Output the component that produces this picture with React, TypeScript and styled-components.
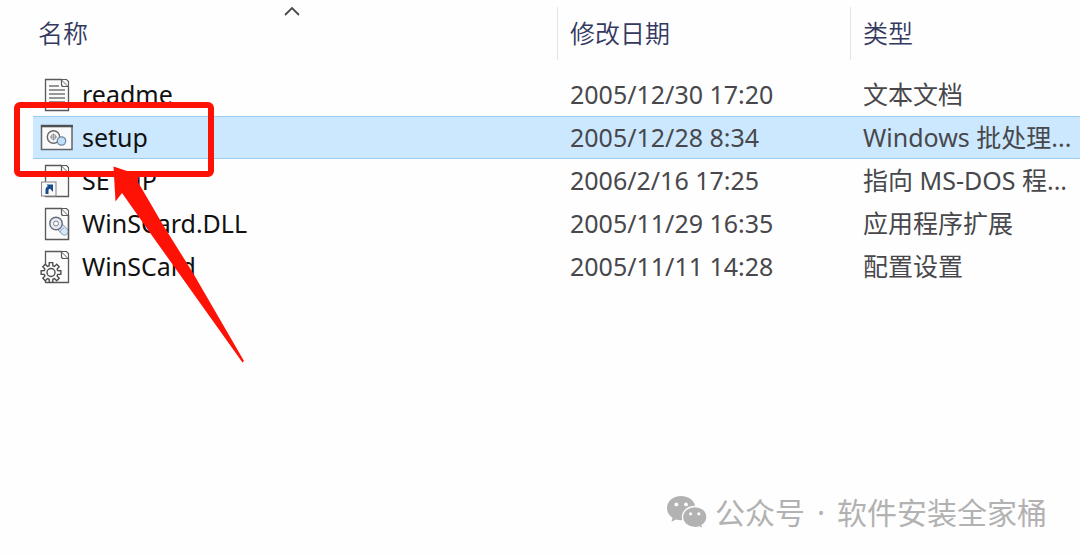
import React from "react";
import styled, { createGlobalStyle } from "styled-components";

const GlobalStyle = createGlobalStyle`
  * { box-sizing: border-box; }
  body {
    margin: 0;
    background: #fefefe;
    font-family: "Noto Sans", "Noto Sans CJK SC", sans-serif;
  }
`;

const Page = styled.main`
  position: relative;
  display: flex;
  flex-direction: column;
  min-height: 100vh;
  overflow: hidden;
`;

const ListArea = styled.section`
  flex: 1;
  padding-left: 33px;
`;

const FileTable = styled.table`
  width: 100%;
  table-layout: fixed;
  border-collapse: separate;
  border-spacing: 0;
`;

const Column = styled.col<{ $width?: number }>`
  width: ${(p) => (p.$width ? `${p.$width}px` : "auto")};
`;

const HeadCell = styled.th`
  position: relative;
  height: 73px;
  padding: 7px 0 13px;
  text-align: left;
  vertical-align: top;
`;

const HeadButton = styled.button<{ $divided?: boolean }>`
  display: block;
  width: 100%;
  height: 53px;
  padding: 0 0 0 ${(p) => (p.$divided ? 12 : 5)}px;
  border: 0;
  border-left: ${(p) => (p.$divided ? "1px solid #e4e4e6" : "0")};
  background: none;
  color: #33395f;
  font: 350 25px/53px "Noto Sans", "Noto Sans CJK SC", sans-serif;
  text-align: left;
`;

const SortMark = styled.svg`
  position: absolute;
  top: 6px;
  left: calc(50% - 11px);
`;

const Row = styled.tr<{ $selected?: boolean }>`
  height: 43px;
  td {
    background: ${(p) => (p.$selected ? "#cce8ff" : "transparent")};
    box-shadow: ${(p) =>
      p.$selected ? "inset 0 1px #9dcdf0, inset 0 -1px #9dcdf0" : "none"};
  }
`;

const Cell = styled.td`
  padding: 0 0 0 13px;
  color: #48484c;
  font-size: 25px;
  font-weight: 400;
  line-height: 43px;
  white-space: nowrap;
`;

const NameCell = styled(Cell)`
  padding-left: 7px;
  color: #111;
`;

const NameContent = styled.div`
  display: flex;
  align-items: center;
  gap: 9px;
  height: 43px;
`;

const Icon = styled.svg`
  flex: none;
  display: block;
`;

const Highlight = styled.div`
  position: absolute;
  top: 102px;
  left: 14px;
  width: 200px;
  height: 75px;
  border: 6px solid #fd1205;
  border-radius: 6px;
  pointer-events: none;
`;

const Pointer = styled.svg`
  position: absolute;
  top: 160px;
  left: 106px;
  pointer-events: none;
`;

const Watermark = styled.footer`
  display: flex;
  align-items: center;
  justify-content: flex-end;
  gap: 8px;
  height: 44px;
  margin-bottom: 21px;
  padding-right: 33px;
  color: #b2b2b2;
  font-size: 30px;
  line-height: 44px;
`;

const Account = styled.span`
  display: flex;
  gap: 12px;
`;

type Kind = "text" | "batch" | "shortcut" | "library" | "config";

const gearPath = (cx: number, cy: number, outer: number, inner: number, teeth: number) => {
  const points: string[] = [];
  for (let i = 0; i < teeth; i++) {
    [
      [-0.34, inner],
      [-0.22, outer],
      [0.22, outer],
      [0.34, inner],
    ].forEach(([t, r]) => {
      const a = ((i + t) / teeth) * Math.PI * 2;
      points.push(`${(cx + r * Math.cos(a)).toFixed(2)} ${(cy + r * Math.sin(a)).toFixed(2)}`);
    });
  }
  return `M${points.join("L")}Z`;
};

const Sheet = () => (
  <>
    <path d="M5.5 1.5H21.5L28.5 8.5V32.5H5.5Z" fill="#fbfbfb" stroke="#59595b" strokeWidth="1.3" />
    <path d="M21.5 1.5H26.5L28.5 3.5V8.5" fill="#fbfbfb" stroke="#59595b" strokeWidth="1.1" />
    <path d="M21.5 1.5V6.5Q21.5 8.5 23.5 8.5H28.5" fill="none" stroke="#59595b" strokeWidth="1.2" />
  </>
);

const FileIcon = ({ kind }: { kind: Kind }) => (
  <Icon width="33" height="34" viewBox="0 0 33 34" aria-hidden="true">
    {kind !== "batch" && <Sheet />}
    {kind === "text" && (
      <path
        d="M9 8H19M9 12H25M9 16H25M9 20H25M9 24H25M9 28H25"
        stroke="#77777b"
        strokeWidth="1.3"
      />
    )}
    {kind === "batch" && (
      <>
        <rect x="1.5" y="4.5" width="30.5" height="24" fill="#fafafa" stroke="#626568" strokeWidth="1.5" />
        <path d="M1 5.2H33" stroke="#4c4e50" strokeWidth="2.2" />
        <circle cx="13.5" cy="16" r="6.2" fill="#f5f5f5" stroke="#68696c" strokeWidth="1.4" />
        <circle cx="13.5" cy="16" r="2.4" fill="none" stroke="#909196" strokeWidth="1" />
        <path d="M13.5 12.5V19.5M10 16H17" stroke="#88898c" strokeWidth="0.8" />
        <circle cx="21.5" cy="20" r="4.2" fill="#c0e0fa" stroke="#6e8aa5" strokeWidth="1.3" />
      </>
    )}
    {kind === "shortcut" && (
      <>
        <rect x="1.5" y="18" width="14.5" height="14" fill="#fafafa" stroke="#8c8c90" strokeWidth="1.1" />
        <path d="M7 30V26Q7 23 11 23" fill="none" stroke="#174b8e" strokeWidth="3" />
        <path d="M6.5 20.5H13V28Z" fill="#174b8e" />
      </>
    )}
    {kind === "library" && (
      <>
        <path d="M19 19L24.5 24.5" stroke="#8396b0" strokeWidth="8" strokeLinecap="round" />
        <path d="M19 19L24.5 24.5" stroke="#d7e7fa" strokeWidth="6.4" strokeLinecap="round" />
        <circle cx="16" cy="16.5" r="6.2" fill="#e5edf6" stroke="#696d78" strokeWidth="1.4" />
        <circle cx="16" cy="16.5" r="2.5" fill="#f8f8f8" stroke="#85858b" strokeWidth="1" />
        <path d="M20 25Q21 22 24 21" fill="none" stroke="#91a8c4" strokeWidth="1" />
        <path d="M28.5 8V33" stroke="#59595b" strokeWidth="1.3" />
      </>
    )}
    {kind === "config" && (
      <>
        <path d={gearPath(11, 22.5, 10, 7, 8)} fill="#fafafa" stroke="#4d4d50" strokeWidth="1.4" />
        <circle cx="11" cy="22.5" r="4" fill="#fdfdfd" stroke="#4d4d50" strokeWidth="1.4" />
      </>
    )}
  </Icon>
);

const files: { name: string; date: string; type: string; kind: Kind; selected?: boolean }[] = [
  { name: "readme", date: "2005/12/30 17:20", type: "文本文档", kind: "text" },
  { name: "setup", date: "2005/12/28 8:34", type: "Windows 批处理...", kind: "batch", selected: true },
  { name: "SETUP", date: "2006/2/16 17:25", type: "指向 MS-DOS 程...", kind: "shortcut" },
  { name: "WinSCard.DLL", date: "2005/11/29 16:35", type: "应用程序扩展", kind: "library" },
  { name: "WinSCard", date: "2005/11/11 14:28", type: "配置设置", kind: "config" },
];

export default function App() {
  return (
    <Page lang="zh-CN">
      <GlobalStyle />
      <ListArea>
        <FileTable>
          <colgroup>
            <Column />
            <Column $width={293} />
            <Column $width={230} />
          </colgroup>
          <thead>
            <tr>
              <HeadCell aria-sort="ascending">
                <HeadButton type="button">名称</HeadButton>
                <SortMark width="16" height="10" viewBox="0 0 16 10" aria-hidden="true">
                  <path d="M1 9L8 2L15 9" fill="none" stroke="#4a4a4c" strokeWidth="1.8" />
                </SortMark>
              </HeadCell>
              <HeadCell>
                <HeadButton type="button" $divided>修改日期</HeadButton>
              </HeadCell>
              <HeadCell>
                <HeadButton type="button" $divided>类型</HeadButton>
              </HeadCell>
            </tr>
          </thead>
          <tbody>
            {files.map((file) => (
              <Row key={file.name} $selected={file.selected}>
                <NameCell>
                  <NameContent>
                    <FileIcon kind={file.kind} />
                    {file.name}
                  </NameContent>
                </NameCell>
                <Cell>{file.date}</Cell>
                <Cell>{file.type}</Cell>
              </Row>
            ))}
          </tbody>
        </FileTable>
      </ListArea>

      <Watermark>
        <Icon width="41" height="36" viewBox="0 0 41 36" aria-hidden="true">
          <path
            d="M15 1C7 1 1 6.4 1 13.2C1 17.3 3.2 20.6 6.6 22.8L5.4 26.8L10 24.5Q12.5 25.4 16 25.3C24 25.3 29.5 20 29.5 13.2C29.5 6.4 23 1 15 1Z"
            fill="#b2b2b2"
          />
          <path
            d="M29 11.5C22 11.5 16.5 16.2 16.5 22C16.5 28 22 32.6 29 32.6Q31.5 32.6 33.5 31.9L37.2 34L36.2 30.4C39.3 28.4 41 25.5 41 22C41 16.2 36 11.5 29 11.5Z"
            fill="#b2b2b2"
            stroke="#fefefe"
            strokeWidth="1.4"
          />
          <g fill="#fefefe">
            <circle cx="10.4" cy="9.4" r="1.9" />
            <circle cx="20" cy="9.4" r="1.9" />
            <circle cx="24.6" cy="18.8" r="1.6" />
            <circle cx="32.8" cy="18.8" r="1.6" />
          </g>
        </Icon>
        <Account>
          <span>公众号</span>
          <span>·</span>
          <span>软件安装全家桶</span>
        </Account>
      </Watermark>

      <Highlight />
      <Pointer width="142" height="206" viewBox="106 160 142 206" aria-hidden="true">
        <path d="M113.5 166.5L139 175L138 182L163 225L193 273L244 361L242.5 362.5L153 237L122 193L115.5 201.5Z" fill="#fd1205" />
      </Pointer>
    </Page>
  );
}
